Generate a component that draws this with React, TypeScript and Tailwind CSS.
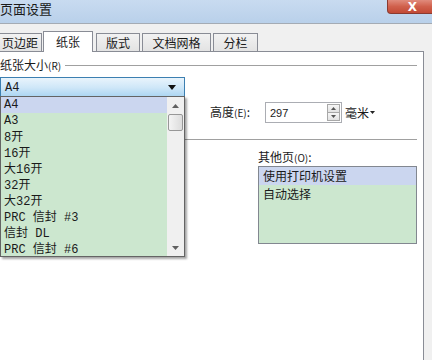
function Mixed({ text }: { text: string }) {
  const parts = text.match(/[\u4e00-\u9fff]+|[^\u4e00-\u9fff]+/g) || [];
  return (
    <span className="flex items-baseline">
      {parts.map((p, i) =>
        /[\u4e00-\u9fff]/.test(p) ? (
          <span key={i} className="text-[12px] leading-[14px] font-['Noto_Sans_CJK_SC',sans-serif]">{p}</span>
        ) : (
          <span key={i} className="whitespace-pre text-[12px] leading-[14px] font-['Liberation_Mono',monospace]">{p}</span>
        )
      )}
    </span>
  );
}

export default function App() {
  const items = ["A4", "A3", "8开", "16开", "大16开", "32开", "大32开", "PRC 信封 #3", "信封 DL", "PRC 信封 #6"];
  return (
    <div className="relative w-[432px] h-[360px] overflow-hidden bg-[#f0f0f0] text-[#1a1a1a] font-['Noto_Sans_CJK_SC',sans-serif]">
      {/* title bar */}
      <div className="flex h-[24px] items-start border-b border-[#a4abb4] bg-gradient-to-b from-[#c8dbf0] to-[#b9d0ea]">
        <div className="ml-0 mt-[1px] text-[13px] leading-[16px]">页面设置</div>
        <div className="flex-1" />
        <div className="mr-[-6px] flex h-[14px] w-[51px] items-center justify-center rounded-b-[4px] border border-t-0 border-[#8a3a30] bg-gradient-to-b from-[#e08b7c] via-[#d0604c] to-[#c24a36]">
          <span className="text-[12px] font-bold leading-[12px] text-white font-['DejaVu_Sans',sans-serif]">X</span>
        </div>
      </div>

      {/* tabs */}
      <div className="relative z-10 mt-[7px] flex h-[20px] items-end text-[12px] leading-[14px]">
        <div className="ml-[-8px] flex h-[18px] w-[50px] items-center justify-center border border-b-0 border-[#898c95] bg-gradient-to-b from-[#f2f2f2] to-[#e3e3e3] pl-[6px]">页边距</div>
        <div className="mb-[-1px] ml-[1px] flex h-[21px] w-[50px] items-center justify-center border border-b-0 border-[#898c95] bg-white">纸张</div>
        <div className="ml-[3px] flex h-[18px] w-[44px] items-center justify-center border border-b-0 border-[#898c95] bg-gradient-to-b from-[#f2f2f2] to-[#e3e3e3]">版式</div>
        <div className="ml-[2px] flex h-[18px] w-[69px] items-center justify-center border border-b-0 border-[#898c95] bg-gradient-to-b from-[#f2f2f2] to-[#e3e3e3]">文档网格</div>
        <div className="ml-[2px] flex h-[18px] w-[45px] items-center justify-center border border-b-0 border-[#898c95] bg-gradient-to-b from-[#f2f2f2] to-[#e3e3e3]">分栏</div>
      </div>

      {/* panel */}
      <div className="h-[320px] w-[424px] border-t border-r border-[#898c95] bg-white text-[12px]">
        <div className="mt-[6px] flex h-[14px] items-center">
          <span className="ml-0 leading-[14px]">纸张大小<span className="text-[10px]">(R)</span></span>
          <div className="ml-[4px] mr-[6px] h-px flex-1 bg-[#a0a0a0]" />
        </div>

        {/* combobox */}
        <div className="mt-[5px] flex h-[21px] w-[185px] items-center border border-[#3c7fb1] bg-gradient-to-b from-[#e9f4fc] via-[#cfe7f8] to-[#a9d4f1] pl-[4px] pr-[8px]">
          <span className="flex-1"><Mixed text="A4" /></span>
          <svg width="8" height="5" viewBox="0 0 8 5"><path d="M0 0h8L4 5z" fill="#111" /></svg>
        </div>

        {/* height row */}
        <div className="ml-[210px] mt-[4px] flex h-[21px] items-center">
          <span className="w-[55px] leading-[14px]">高度<span className="text-[10px]">(E)</span>:</span>
          <div className="flex h-[21px] w-[77px] items-center border border-[#abadb3] bg-white pl-[4px]">
            <span className="flex-1 text-[11px] leading-[14px] font-['Liberation_Sans',sans-serif]">297</span>
            <div className="mr-[1px] flex h-[17px] w-[13px] flex-col border border-[#a8a8a8]">
              <div className="flex flex-1 items-center justify-center border-b border-[#a8a8a8] bg-gradient-to-b from-[#f6f6f6] to-[#e2e2e2]">
                <svg width="5" height="3" viewBox="0 0 5 3"><path d="M0 3h5L2.5 0z" fill="#555" /></svg>
              </div>
              <div className="flex flex-1 items-center justify-center bg-gradient-to-b from-[#f6f6f6] to-[#e2e2e2]">
                <svg width="5" height="3" viewBox="0 0 5 3"><path d="M0 0h5L2.5 3z" fill="#555" /></svg>
              </div>
            </div>
          </div>
          <span className="ml-[3px] leading-[14px]">毫米</span>
          <svg className="ml-[1px]" width="5" height="3" viewBox="0 0 5 3"><path d="M0 0h5L2.5 3z" fill="#222" /></svg>
        </div>

        <div className="ml-[10px] mr-[6px] mt-[16px] h-px bg-[#a0a0a0]" />

        <div className="ml-[258px] mt-[10px] leading-[14px]">其他页<span className="text-[10px]">(O)</span>:</div>
        <div className="ml-[258px] mt-[1px] h-[78px] w-[159px] border border-[#828790] bg-[#cce7cf]">
          <div className="h-[18px] bg-[#cbd6ef] pl-[4px] leading-[18px]">使用打印机设置</div>
          <div className="h-[18px] pl-[4px] leading-[18px]">自动选择</div>
        </div>
      </div>

      {/* dropdown list */}
      <div className="absolute left-0 top-[96px] z-20 flex h-[161px] w-[185px] border border-[#646464] bg-[#cce7cf] text-[12px] shadow-[2px_2px_2px_rgba(0,0,0,0.35)]">
        <div className="flex-1">
          {items.map((t, i) => (
            <div key={t} className={`flex h-[16px] items-center pl-[3px] ${i === 0 ? "bg-[#cbd6ef]" : ""}`}><Mixed text={t} /></div>
          ))}
        </div>
        <div className="flex w-[17px] flex-col bg-[#f0f0f0]">
          <div className="flex h-[17px] items-center justify-center">
            <svg width="7" height="4" viewBox="0 0 7 4"><path d="M0 4h7L3.5 0z" fill="#606060" /></svg>
          </div>
          <div className="mx-[1px] h-[17px] rounded-[2px] border border-[#979797] bg-gradient-to-r from-[#f4f4f4] to-[#dcdcdc]" />
          <div className="flex-1" />
          <div className="flex h-[17px] items-center justify-center">
            <svg width="7" height="4" viewBox="0 0 7 4"><path d="M0 0h7L3.5 4z" fill="#606060" /></svg>
          </div>
        </div>
      </div>
    </div>
  );
}
